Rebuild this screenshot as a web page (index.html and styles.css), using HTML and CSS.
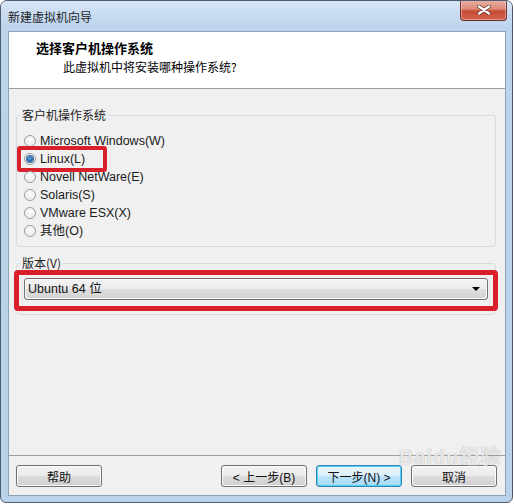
FILE: index.html
```html
<!DOCTYPE html>
<html lang="zh-CN">

<head>
   <meta charset="UTF-8">
   <title>新建虚拟机向导</title>
   <link rel="stylesheet" href="styles.css">
</head>

<body>
   <div class="window">
      <div class="titlebar">
         <span class="titlebar__text">新建虚拟机向导</span>
         <button class="titlebar__close" type="button" aria-label="关闭">
            <svg width="14" height="10" viewBox="0 0 14 10">
               <path d="M2 1.5 L12 8.5 M12 1.5 L2 8.5" stroke="#5a2a22" stroke-width="3.6" stroke-linecap="round"/>
               <path d="M2 1.5 L12 8.5 M12 1.5 L2 8.5" stroke="#ffffff" stroke-width="2.2" stroke-linecap="round"/>
            </svg>
         </button>
      </div>

      <div class="client">
         <div class="wizard-head">
            <div class="wizard-head__title">选择客户机操作系统</div>
            <div class="wizard-head__sub">此虚拟机中将安装哪种操作系统?</div>
         </div>

         <div class="wizard-body">
            <fieldset class="group group--os">
               <legend class="group__label">客户机操作系统</legend>
               <label class="radio"><span class="radio__dot"></span>Microsoft Windows(W)</label>
               <label class="radio radio--checked radio--marked"><span class="radio__dot"></span>Linux(L)</label>
               <label class="radio"><span class="radio__dot"></span>Novell NetWare(E)</label>
               <label class="radio"><span class="radio__dot"></span>Solaris(S)</label>
               <label class="radio"><span class="radio__dot"></span>VMware ESX(X)</label>
               <label class="radio"><span class="radio__dot"></span>其他(O)</label>
            </fieldset>

            <fieldset class="group group--version">
               <legend class="group__label">版本(V)</legend>
               <div class="select">
                  <span class="select__value">Ubuntu 64 位</span>
                  <span class="select__arrow"></span>
               </div>
            </fieldset>
         </div>

         <div class="wizard-foot">
            <button class="btn" type="button">帮助</button>
            <div class="wizard-foot__nav">
               <button class="btn" type="button">&lt; 上一步(B)</button>
               <button class="btn btn--default" type="button">下一步(N) &gt;</button>
               <button class="btn" type="button">取消</button>
            </div>
            <!-- водяной знак поверх кнопок -->
            <div class="watermark">Baidu经验</div>
         </div>
      </div>
   </div>
</body>

</html>
```

FILE: styles.css
```css
*,
*::before,
*::after {
   box-sizing: border-box;
}

html,
body {
   margin: 0;
   padding: 0;
   background-color: #ffffff;
   font-family: "Liberation Sans", "Noto Sans CJK SC", sans-serif;
   font-size: 12px;
   color: #000000;
}

.window {
   width: 513px;
   height: 503px;
   border: 1px solid #4d5b6c;
   border-radius: 7px 7px 6px 6px;
   background: linear-gradient(to bottom, #c9dcf1 0px, #bcd3ec 40px, #bad1ea 100%);
   display: flex;
   flex-direction: column;
   overflow: hidden;
}

.titlebar {
   position: relative;
   height: 30px;
   flex-shrink: 0;
   display: flex;
   align-items: center;
   padding-left: 7px;
   background: linear-gradient(to bottom, #d9e7f6 0%, #c6daf0 50%, #bcd3ec 100%);
}

.titlebar__text {
   font-family: "Noto Sans CJK SC", sans-serif;
   font-size: 12px;
   line-height: 16px;
   color: #1e1e1e;
   margin-top: 1px;
}

.titlebar__close {
   position: absolute;
   top: -1px;
   right: 5px;
   width: 47px;
   height: 21px;
   padding: 0;
   border: 1px solid #6f3128;
   border-top: none;
   border-radius: 0 0 4px 4px;
   background: linear-gradient(to bottom, #e9b4a8 0%, #dd8a78 45%, #c84a34 55%, #d0614a 100%);
   box-shadow: inset 0 0 0 1px rgba(255, 255, 255, 0.35);
   display: flex;
   align-items: center;
   justify-content: center;
}

.client {
   flex: 1;
   margin: 0 6px 6px 7px;
   border: 1px solid #8ea2b8;
   background-color: #f0f0f0;
   display: flex;
   flex-direction: column;
}

.wizard-head {
   height: 57px;
   flex-shrink: 0;
   background-color: #ffffff;
   border-bottom: 1px solid #a0a0a0;
   padding-top: 8px;
   font-family: "Noto Sans CJK SC", sans-serif;
}

.wizard-head__title {
   padding-left: 27px;
   font-size: 13px;
   font-weight: bold;
   line-height: 16px;
}

.wizard-head__sub {
   margin-top: 3px;
   padding-left: 54px;
   font-size: 12px;
   line-height: 16px;
}

.wizard-body {
   padding: 18px 9px 0 7px;
   display: flex;
   flex-direction: column;
   gap: 8px;
}

.group {
   margin: 0;
   padding: 0 7px;
   border: 1px solid #d5dbe0;
   border-radius: 3px;
   min-width: 0;
}

.group__label {
   margin-left: -4px;
   padding: 0 2px;
   font-family: "Noto Sans CJK SC", sans-serif;
   font-size: 12px;
   line-height: 16px;
   color: #1e1e1e;
}

.group--os {
   padding-top: 9px;
   padding-bottom: 6px;
}

.group--version {
   padding-top: 7px;
   padding-bottom: 14px;
}

.radio {
   position: relative;
   display: flex;
   align-items: center;
   gap: 4px;
   height: 18px;
   line-height: 18px;
   font-size: 12.5px;
   color: #1a1a1a;
}

.radio__dot {
   width: 12px;
   height: 12px;
   border-radius: 50%;
   border: 1px solid #9a9a9a;
   background: radial-gradient(circle at 50% 40%, #ffffff 0%, #eeeeee 55%, #d6d6d6 100%);
   box-shadow: inset 0 0 0 1px #f7f7f7;
   flex-shrink: 0;
   position: relative;
}

.radio--checked .radio__dot::after {
   content: "";
   position: absolute;
   top: 2px;
   left: 2px;
   width: 6px;
   height: 6px;
   border-radius: 50%;
   background: radial-gradient(circle at 45% 40%, #6fb2e6 0%, #2a6fb0 45%, #16457a 100%);
   box-shadow: 0 0 0 1px #3b6e99;
}

/* красная рамка выделения */
.radio--marked::before {
   content: "";
   position: absolute;
   top: -4px;
   left: -7px;
   width: 90px;
   height: 26px;
   border: 4px solid #d9202a;
   border-radius: 3px;
}

.select {
   position: relative;
   height: 22px;
   display: flex;
   align-items: center;
   justify-content: space-between;
   padding: 0 7px 0 3px;
   border: 1px solid #707070;
   border-radius: 3px;
   background: linear-gradient(to bottom, #f4f4f4 0%, #ebebeb 50%, #dddddd 51%, #d3d3d3 100%);
   box-shadow: inset 0 0 0 1px #fafafa;
}

.select::after {
   content: "";
   position: absolute;
   top: -9px;
   left: -11px;
   right: -11px;
   bottom: -12px;
   border: 5px solid #d9202a;
   border-radius: 4px;
}

.select__value {
   font-size: 12.5px;
   line-height: 16px;
   color: #111111;
}

.select__arrow {
   width: 0;
   height: 0;
   border-left: 4px solid transparent;
   border-right: 4px solid transparent;
   border-top: 4px solid #000000;
}

.wizard-foot {
   position: relative;
   margin-top: auto;
   border-top: 1px solid #a0a0a0;
   padding: 9px 8px 8px 7px;
   display: flex;
   justify-content: space-between;
}

.wizard-foot__nav {
   display: flex;
   gap: 9px;
}

.btn {
   width: 86px;
   height: 22px;
   padding: 0;
   border: 1px solid #707070;
   border-radius: 3px;
   background: linear-gradient(to bottom, #f2f2f2 0%, #ebebeb 50%, #dddddd 51%, #cfcfcf 100%);
   box-shadow: inset 0 0 0 1px #fcfcfc;
   font-family: "Liberation Sans", "Noto Sans CJK SC", sans-serif;
   font-size: 12px;
   color: #111111;
}

.btn--default {
   border-color: #3c7fb1;
   background: linear-gradient(to bottom, #eaf6fd 0%, #d9f0fc 50%, #bee6fd 51%, #a7d9f5 100%);
   box-shadow: inset 0 0 0 1px #48d8fb;
}

.watermark {
   position: absolute;
   left: 390px;
   top: -9px;
   pointer-events: none;
   font-family: "Liberation Sans", "Noto Sans CJK SC", sans-serif;
   font-size: 20px;
   font-weight: bold;
   line-height: 20px;
   letter-spacing: 1px;
   color: rgba(255, 255, 255, 0.75);
   text-shadow: 0 0 1px rgba(120, 120, 120, 0.7);
}
```
